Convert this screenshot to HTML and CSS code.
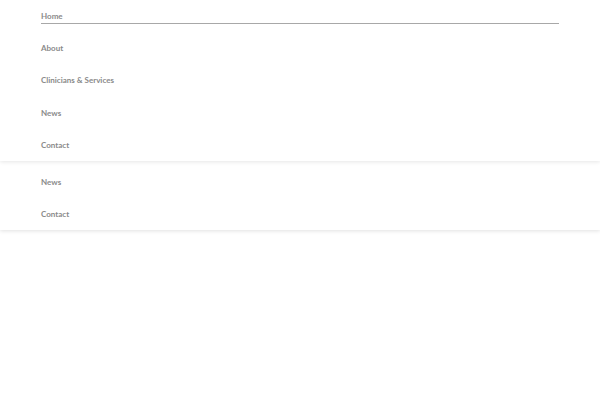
FILE: index.html
```html
<!DOCTYPE html>
<html lang="en">
<head>
    <meta charset="UTF-8">
    <meta name="viewport" content="width=device-width, initial-scale=1.0">
    <title>Menu</title>
    <link rel="stylesheet" href="styles.css">
</head>
<body>
    <nav class="menu menu-main">
        <ul class="menu-list">
            <li class="menu-item active"><a href="#">Home</a></li>
            <li class="menu-item"><a href="#">About</a></li>
            <li class="menu-item"><a href="#">Clinicians &amp; Services</a></li>
            <li class="menu-item"><a href="#">News</a></li>
            <li class="menu-item"><a href="#">Contact</a></li>
        </ul>
    </nav>
    <nav class="menu menu-sub">
        <ul class="menu-list">
            <li class="menu-item"><a href="#">News</a></li>
            <li class="menu-item"><a href="#">Contact</a></li>
        </ul>
    </nav>
</body>
</html>
```

FILE: styles.css
```css
body {
    margin: 0;
    min-height: 400px;
    font-family: Lato, "Open Sans", sans-serif;
    background-color: #fff;
}
.menu {
    background-color: #fff;
    box-shadow: 0 1px 4px rgba(0, 0, 0, 0.1);
    position: relative;
}
.menu-main {
    z-index: 2;
}
.menu-sub {
    padding-top: 5px;
    z-index: 1;
    box-shadow: 0 1px 4px rgba(0, 0, 0, 0.12);
}
.menu-list {
    list-style: none;
    margin: 0;
    padding: 0 41px;
}
.menu-item {
    height: 32.2px;
    display: flex;
    align-items: center;
}
.menu-item a {
    color: #8a8a8a;
    font-size: 8px;
    font-weight: 700;
    text-decoration: none;
}
.menu-item.active {
    align-items: flex-start;
}
.menu-item.active a {
    display: block;
    width: 100%;
    margin-top: 11px;
    padding-bottom: 2px;
    border-bottom: 1.5px solid #a8a8a8;
}
```
